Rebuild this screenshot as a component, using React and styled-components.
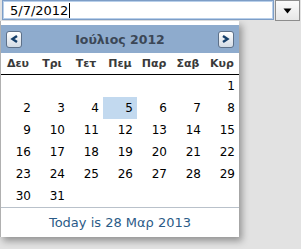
import React from 'react';
import styled, { createGlobalStyle } from 'styled-components';

const GlobalStyle = createGlobalStyle`
  html, body {
    margin: 0;
    padding: 0;
    background: #e2e2e2;
  }
  body {
    font-family: "DejaVu Sans", "Liberation Sans", sans-serif;
  }
`;

const SPage = styled.div`
  width: 301px;
  height: 249px;
  overflow: hidden;
  background: #e2e2e2;
`;

const SFieldRow = styled.div`
  display: flex;
  align-items: flex-start;
  height: 21px;
`;

const SField = styled.div`
  box-sizing: border-box;
  display: flex;
  align-items: center;
  width: 272px;
  height: 20px;
  margin-left: 2px;
  padding-left: 7px;
  background: #fff;
  border: 1px solid #7d9dc6;
  box-shadow: inset 0 0 0 1px #b8cfea;
  font-size: 13px;
  color: #000;
`;

const SCaret = styled.span`
  display: inline-block;
  width: 1px;
  height: 15px;
  margin-left: 1px;
  background: #000;
`;

const SDropButton = styled.button`
  box-sizing: border-box;
  display: flex;
  align-items: center;
  justify-content: center;
  width: 25px;
  height: 21px;
  margin-left: 1px;
  padding: 0;
  border: 1px solid #8d8d8d;
  background: linear-gradient(#fbfbfb, #e6e6e6);
`;

const SPopup = styled.div`
  box-sizing: border-box;
  width: 239px;
  padding-top: 4px;
  background: #fff;
  border-left: 1px solid #b0b0b0;
  box-shadow: 3px 4px 7px rgba(0, 0, 0, 0.35);
`;

const SHeader = styled.div`
  display: flex;
  align-items: center;
  justify-content: space-between;
  height: 28px;
  padding: 0 5px;
  background: #8eabcd;
`;

const STitle = styled.div`
  font-size: 12.5px;
  font-weight: bold;
  color: #3b4756;
`;

const SNavButton = styled.button`
  box-sizing: border-box;
  display: flex;
  align-items: center;
  justify-content: center;
  width: 16px;
  height: 17px;
  padding: 0;
  border: 1px solid #5d7088;
  border-radius: 3px;
  background: linear-gradient(#ffffff, #d3dbe5);
`;

const SWeekHead = styled.div`
  display: grid;
  grid-template-columns: repeat(7, 1fr);
  height: 21px;
  border-bottom: 1px solid #000;
`;

const SWeekDay = styled.div`
  display: flex;
  align-items: center;
  justify-content: center;
  font-size: 11px;
  font-weight: bold;
  color: #3a3a3a;
`;

const SGrid = styled.div`
  display: grid;
  grid-template-columns: repeat(7, 1fr);
  grid-auto-rows: 22px;
`;

const SDay = styled.div`
  display: flex;
  align-items: center;
  justify-content: flex-end;
  padding-right: 4px;
  font-size: 12px;
  color: #000;
  background: ${({ $selected }) => ($selected ? '#c2d9ef' : 'transparent')};
`;

const SFooter = styled.div`
  display: flex;
  align-items: center;
  justify-content: center;
  height: 29px;
  border-top: 1px solid #b9c1ca;
  font-size: 13px;
  color: #2b5b87;
`;

const weekDays = ['Δευ', 'Τρι', 'Τετ', 'Πεμ', 'Παρ', 'Σαβ', 'Κυρ'];

function Arrow({ dir }) {
  const d = dir === 'left' ? 'M7 2 L2.5 5 L7 8' : 'M2 2 L6.5 5 L2 8';
  return (
    <svg width="9" height="10" viewBox="0 0 9 10">
      <path d={d} fill="none" stroke="#153f6a" strokeWidth="2.4" strokeLinejoin="miter" />
    </svg>
  );
}

export default function App() {
  const cells = [];
  for (let i = 0; i < 6; i += 1) cells.push(null);
  for (let d = 1; d <= 31; d += 1) cells.push(d);

  return (
    <SPage>
      <GlobalStyle />
      <SFieldRow>
        <SField>
          5/7/2012
          <SCaret />
        </SField>
        <SDropButton type="button">
          <svg width="9" height="6" viewBox="0 0 9 6">
            <path d="M0.5 0.5 H8.5 L4.5 5.5 Z" fill="#000" />
          </svg>
        </SDropButton>
      </SFieldRow>
      <SPopup>
        <SHeader>
          <SNavButton type="button">
            <Arrow dir="left" />
          </SNavButton>
          <STitle>Ιούλιος 2012</STitle>
          <SNavButton type="button">
            <Arrow dir="right" />
          </SNavButton>
        </SHeader>
        <SWeekHead>
          {weekDays.map((w) => (
            <SWeekDay key={w}>{w}</SWeekDay>
          ))}
        </SWeekHead>
        <SGrid>
          {cells.map((d, i) => (
            <SDay key={i} $selected={d === 5}>
              {d}
            </SDay>
          ))}
        </SGrid>
        <SFooter>Today is 28 Μαρ 2013</SFooter>
      </SPopup>
    </SPage>
  );
}
